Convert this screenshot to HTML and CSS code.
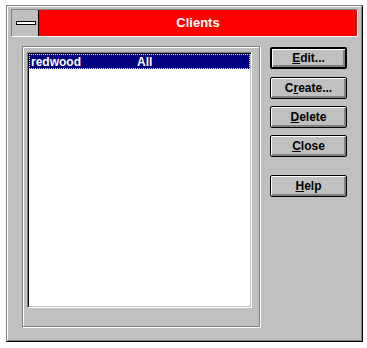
FILE: index.html
```html
<!DOCTYPE html>
<html>
<head>
<meta charset="utf-8">
<link rel="stylesheet" href="styles.css">
</head>
<body>
<div class="win">
  <div class="win-inner">
    <div class="titlebar">
      <div class="sysmenu"><span class="dash"></span></div>
      <div class="caption">Clients</div>
    </div>
    <div class="content">
      <div class="group">
        <div class="listbox">
          <div class="row selected"><span class="col-name">redwood</span><span class="col-scope">All</span></div>
        </div>
      </div>
      <div class="buttons">
        <button class="btn default"><u>E</u>dit...</button>
        <button class="btn">C<u>r</u>eate...</button>
        <button class="btn"><u>D</u>elete</button>
        <button class="btn"><u>C</u>lose</button>
        <button class="btn help"><u>H</u>elp</button>
      </div>
    </div>
  </div>
</div>
</body>
</html>
```
FILE: styles.css
```css
html, body {
  margin: 0;
  padding: 0;
  background: #ffffff;
}
body {
  font-family: "Liberation Sans", Arial, sans-serif;
}
.win {
  margin: 5px 0 0 6px;
  width: 357px;
  height: 337px;
  box-sizing: border-box;
  border: 1px solid;
  border-color: #808080 #000000 #000000 #808080;
  background: #c0c0c0;
}
.win-inner {
  box-sizing: border-box;
  height: 100%;
  border: 1px solid;
  border-color: #ffffff #808080 #808080 #ffffff;
  padding: 2px 3px 0 3px;
}
.titlebar {
  box-sizing: border-box;
  height: 28px;
  display: flex;
  border: 1px solid;
  border-color: #808080 #ffffff #ffffff #808080;
}
.sysmenu {
  width: 26px;
  border-right: 1px solid #000000;
  background: #c0c0c0;
  display: flex;
  align-items: center;
  justify-content: center;
}
.dash {
  display: block;
  width: 18px;
  height: 2px;
  border: 1px solid #000000;
  background: #ffffff;
  margin-left: 2px;
}
.caption {
  flex: 1;
  background: #ff0000;
  color: #ffffff;
  font-weight: bold;
  font-size: 13px;
  line-height: 26px;
  text-align: center;
}
.content {
  display: flex;
  align-items: flex-start;
  padding: 9px 0 0 11px;
}
.group {
  box-sizing: border-box;
  width: 238px;
  height: 281px;
  border: 1px solid #808080;
  box-shadow: 1px 1px 0 #ffffff, inset 1px 1px 0 #ffffff;
  padding: 5px 0 0 4px;
}
.listbox {
  box-sizing: border-box;
  width: 225px;
  height: 256px;
  border: 1px solid;
  border-color: #808080 #ffffff #ffffff #808080;
  background: #ffffff;
  box-shadow: inset 1px 1px 0 #000000, inset -1px -1px 0 #c0c0c0;
  padding: 1px;
}
.row {
  box-sizing: border-box;
  height: 15px;
  display: flex;
  align-items: center;
  font-size: 12px;
  font-weight: bold;
  padding-left: 1px;
}
.row.selected {
  background: #000080;
  color: #ffffff;
  border: 1px dotted #ffff00;
}
.col-name {
  width: 106px;
}
.buttons {
  display: flex;
  flex-direction: column;
  margin-left: 10px;
  margin-top: 1px;
  gap: 7px;
}
.btn {
  box-sizing: border-box;
  width: 77px;
  height: 22px;
  margin: 0;
  padding: 0;
  font-family: "Liberation Sans", Arial, sans-serif;
  font-size: 12px;
  font-weight: bold;
  color: #000000;
  background: #c0c0c0;
  border: 1px solid #000000;
  border-radius: 2px;
  box-shadow: inset 1px 1px 0 #ffffff, inset -1px -1px 0 #808080, inset -2px -2px 0 #808080;
}
.btn.default {
  border-width: 2px;
  margin-bottom: 1px;
}
.btn.help {
  margin-top: 11px;
}
.btn u {
  text-decoration: underline;
  text-underline-offset: 1px;
}
```
